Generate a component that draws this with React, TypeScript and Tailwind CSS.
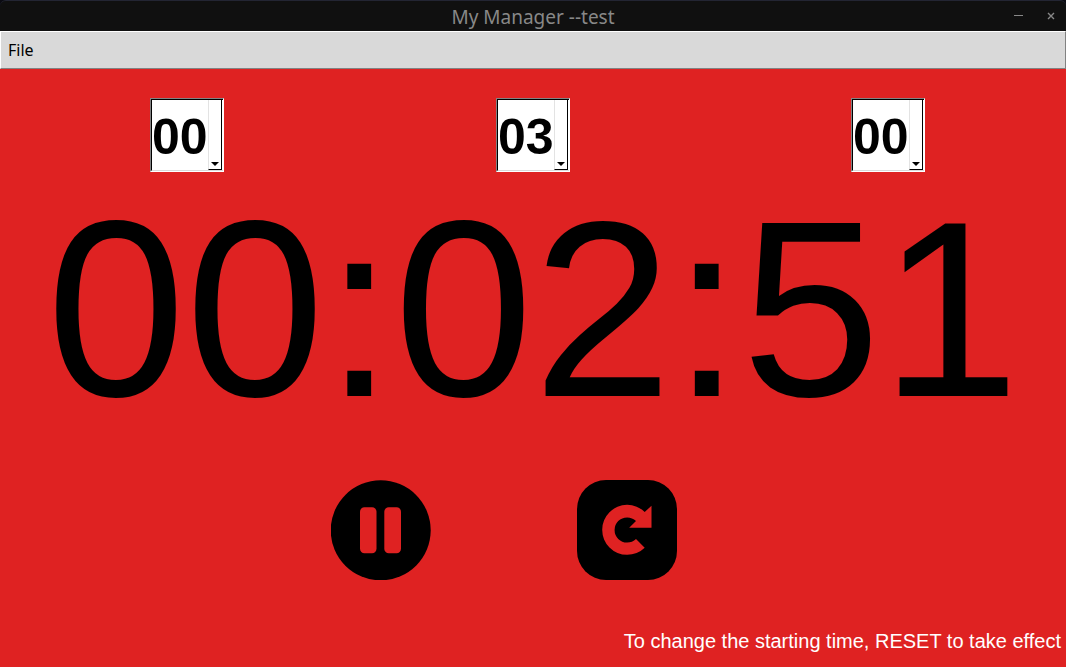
import { useState } from "react";

type TimeSelectProps = {
  label: string;
  initial: number;
  count: number;
};

const pad = (value: number) => String(value).padStart(2, "0");

function TimeSelect({ label, initial, count }: TimeSelectProps) {
  const [value, setValue] = useState(initial);

  return (
    <div className="relative h-[74px] border border-t-[#828282] border-l-[#828282] border-r-white border-b-white bg-white">
      <div className="h-full border-t border-l border-black border-b border-b-[#d9d9d9]">
        <select
          aria-label={label}
          value={value}
          onChange={(event) => setValue(Number(event.target.value))}
          className="block h-full w-full appearance-none bg-white pt-1 font-['Liberation_Sans',sans-serif] text-[50px] leading-[66px] font-bold text-black outline-none"
        >
          {Array.from({ length: count }, (_, n) => (
            <option key={n} value={n}>
              {pad(n)}
            </option>
          ))}
        </select>
      </div>
      <span className="pointer-events-none absolute top-px right-px bottom-px flex w-[14px] items-end justify-center border-r border-b border-l border-black border-l-[#e3e3e3] bg-white pb-[3px]">
        <svg viewBox="0 0 8 4" className="h-1 w-2" aria-hidden="true">
          <path d="M0 0h8L4 4z" />
        </svg>
      </span>
    </div>
  );
}

function PauseIcon() {
  return (
    <svg viewBox="0 0 100 100" className="w-full" aria-hidden="true">
      <circle cx="49.7" cy="50.3" r="50" />
      <rect x="29" y="27.3" width="16.5" height="46" rx="4.5" fill="#df2222" />
      <rect x="53.3" y="27.3" width="16.7" height="46" rx="4.5" fill="#df2222" />
    </svg>
  );
}

function ResetIcon() {
  return (
    <svg viewBox="0 0 100 100" className="w-full" aria-hidden="true">
      <rect width="100" height="100" rx="29" />
      <path
        d="M67.7 67.7A25 25 0 1 1 67.7 32L74.5 25.7V47.8H52.2L59 41A12.6 12.6 0 1 0 59 59z"
        fill="#df2222"
      />
    </svg>
  );
}

export default function App() {
  const [paused, setPaused] = useState(false);

  return (
    <div className="flex min-h-screen flex-col bg-[#df2222] font-['Liberation_Sans',sans-serif] text-black">
      <div className="bg-[#0b0b12]">
        <header className="grid h-[31px] grid-cols-[1fr_auto_1fr] items-center rounded-t-md border-t border-[#232533] bg-[#101010] text-[#888888]">
          <h1 className="col-start-2 pt-0.5 font-['Noto_Sans',sans-serif] text-[19px] leading-7">
            My Manager --test
          </h1>
          <div className="flex items-center justify-end gap-6 pr-[11px]">
            <button type="button" aria-label="Minimize" className="flex h-5 items-center">
              <svg viewBox="0 0 9 9" className="size-[9px]" fill="none" stroke="currentColor" aria-hidden="true">
                <path d="M0 3.5h9" />
              </svg>
            </button>
            <button type="button" aria-label="Close" className="flex h-5 items-center">
              <svg viewBox="0 0 8 8" className="size-2" fill="none" stroke="currentColor" strokeWidth="1.4" aria-hidden="true">
                <path d="M1 1l6 6M7 1l-6 6" />
              </svg>
            </button>
          </div>
        </header>
      </div>

      <nav className="flex h-[38px] items-center border border-t-white border-l-white border-r-[#828282] border-b-[#828282] bg-[#d9d9d9] px-[7px]">
        <button type="button" className="font-['Noto_Sans',sans-serif] text-base">
          File
        </button>
      </nav>

      <main className="flex flex-1 flex-col">
        <div className="grid grid-cols-[150fr_74px_272fr_74px_281fr_74px_141fr] pt-[29px]">
          <div className="col-start-2">
            <TimeSelect label="Hours" initial={0} count={24} />
          </div>
          <div className="col-start-4">
            <TimeSelect label="Minutes" initial={3} count={60} />
          </div>
          <div className="col-start-6">
            <TimeSelect label="Seconds" initial={0} count={60} />
          </div>
        </div>

        <p role="timer" className="text-center text-[250px] leading-[276px] whitespace-nowrap">
          00:02:51
        </p>

        <div className="grid grid-cols-[331fr_100px_146fr_100px_389fr] pt-8">
          <button
            type="button"
            aria-label={paused ? "Resume" : "Pause"}
            onClick={() => setPaused(!paused)}
            className="col-start-2"
          >
            <PauseIcon />
          </button>
          <button type="button" aria-label="Reset" className="col-start-4">
            <ResetIcon />
          </button>
        </div>

        <p className="mt-auto pr-[5px] pb-3 text-right text-[20px] leading-7 text-white">
          To change the starting time, RESET to take effect
        </p>
      </main>
    </div>
  );
}
